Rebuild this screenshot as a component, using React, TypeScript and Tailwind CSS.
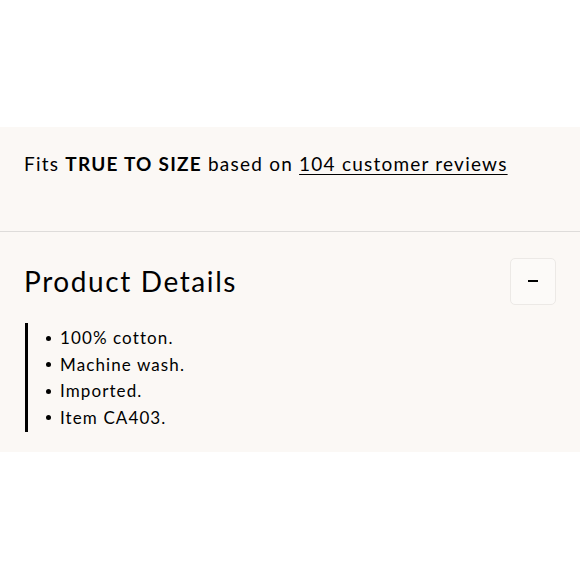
import React from "react";

export default function App() {
  const items = ["100% cotton.", "Machine wash.", "Imported.", "Item CA403."];
  return (
    <div className="w-[580px] h-[580px] bg-white text-black" style={{ fontFamily: "Lato, 'Open Sans', sans-serif" }}>
      <div className="h-[127px] bg-white" />
      <div className="bg-[#fbf8f5]">
        <div className="h-[104px] px-6 pt-[23px]">
          <p className="text-[19px] leading-[28px] tracking-[1.22px] whitespace-nowrap">
            Fits <span className="font-bold">TRUE TO SIZE</span> based on{" "}
            <span className="underline underline-offset-[3px] decoration-1">104 customer reviews</span>
          </p>
        </div>
        <div className="border-t border-[#dedcda]" />
        <div className="px-6 pt-[25px] pb-[20px]">
          <div className="flex items-center justify-between">
            <h2 className="text-[28px] leading-[48px] tracking-[1.6px]">Product Details</h2>
            <button className="w-[46px] h-[47px] rounded-[5px] border border-[#ece9e6] bg-[#fcfaf8] flex items-center justify-center">
              <span className="block w-[10px] h-[2px] bg-black" />
            </button>
          </div>
          <ul className="mt-[18px] ml-[1px] border-l-[3px] border-black pl-[18px] pt-[2px] pb-[1px]">
            {items.map((t) => (
              <li key={t} className="flex items-center text-[17px] leading-[26.5px] tracking-[1.1px]">
                <span className="w-[5px] h-[5px] rounded-full bg-black mr-[9px]" />
                {t}
              </li>
            ))}
          </ul>
        </div>
      </div>
    </div>
  );
}
